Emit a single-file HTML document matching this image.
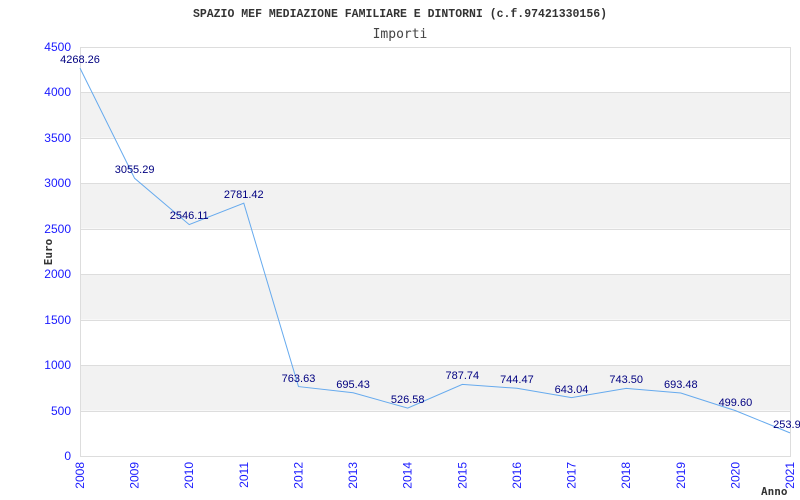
<!DOCTYPE html>
<html><head><meta charset="utf-8"><style>
html,body{margin:0;padding:0;background:#fff;width:800px;height:500px;overflow:hidden}
</style></head><body>
<svg width="800" height="500" xmlns="http://www.w3.org/2000/svg" font-family="Liberation Sans, sans-serif">
<rect width="800" height="500" fill="#fff"/>
<g fill="#f2f2f2">
<rect x="80" y="92" width="710" height="45.5"/>
<rect x="80" y="183" width="710" height="45.5"/>
<rect x="80" y="274" width="710" height="45.5"/>
<rect x="80" y="365" width="710" height="45.5"/>
</g>
<g stroke="#dddddd" stroke-width="1">
<line x1="80" y1="47.5" x2="790" y2="47.5"/>
<line x1="80" y1="92.5" x2="790" y2="92.5"/>
<line x1="80" y1="138.5" x2="790" y2="138.5"/>
<line x1="80" y1="183.5" x2="790" y2="183.5"/>
<line x1="80" y1="229.5" x2="790" y2="229.5"/>
<line x1="80" y1="274.5" x2="790" y2="274.5"/>
<line x1="80" y1="320.5" x2="790" y2="320.5"/>
<line x1="80" y1="365.5" x2="790" y2="365.5"/>
<line x1="80" y1="411.5" x2="790" y2="411.5"/>
<line x1="80" y1="456.5" x2="790" y2="456.5"/>
<line x1="80.5" y1="47" x2="80.5" y2="457"/>
<line x1="790.5" y1="47" x2="790.5" y2="457"/>
</g>
<text x="400" y="17" text-anchor="middle" font-family="Liberation Mono, monospace" font-weight="bold" font-size="11.5" fill="#333">SPAZIO MEF MEDIAZIONE FAMILIARE E DINTORNI (c.f.97421330156)</text>
<text x="400" y="38" text-anchor="middle" font-family="DejaVu Sans Mono, monospace" font-size="13" fill="#444">Importi</text>
<g fill="#1a1aff" font-size="12" text-anchor="end">
<text x="71" y="51">4500</text><text x="71" y="96">4000</text><text x="71" y="142">3500</text>
<text x="71" y="187">3000</text><text x="71" y="233">2500</text><text x="71" y="278">2000</text>
<text x="71" y="324">1500</text><text x="71" y="369">1000</text><text x="71" y="415">500</text>
<text x="71" y="460">0</text>
</g>
<text transform="translate(52,252) rotate(-90)" text-anchor="middle" font-family="DejaVu Sans Mono, monospace" font-weight="bold" font-size="11" fill="#333">Euro</text>
<g fill="#1a1aff" font-size="12" text-anchor="end">
<text transform="translate(84,462) rotate(-90)">2008</text>
<text transform="translate(138.6,462) rotate(-90)">2009</text>
<text transform="translate(193.2,462) rotate(-90)">2010</text>
<text transform="translate(247.8,462) rotate(-90)">2011</text>
<text transform="translate(302.5,462) rotate(-90)">2012</text>
<text transform="translate(357.1,462) rotate(-90)">2013</text>
<text transform="translate(411.7,462) rotate(-90)">2014</text>
<text transform="translate(466.3,462) rotate(-90)">2015</text>
<text transform="translate(520.9,462) rotate(-90)">2016</text>
<text transform="translate(575.5,462) rotate(-90)">2017</text>
<text transform="translate(630.2,462) rotate(-90)">2018</text>
<text transform="translate(684.8,462) rotate(-90)">2019</text>
<text transform="translate(739.4,462) rotate(-90)">2020</text>
<text transform="translate(794,462) rotate(-90)">2021</text>
</g>
<text x="761" y="495" font-family="DejaVu Sans Mono, monospace" font-weight="bold" font-size="11" fill="#333">Anno</text>
<polyline fill="none" stroke="#66aaee" stroke-width="1" points="80,68.1 134.6,178.3 189.2,224.6 243.8,203.2 298.5,386.6 353.1,392.8 407.7,408.1 462.3,384.4 516.9,388.3 571.5,397.6 626.2,388.4 680.8,393 735.4,410.6 790,432.9"/>
<g fill="#000080" font-size="11" text-anchor="middle">
<text x="80" y="63">4268.26</text>
<text x="134.6" y="173">3055.29</text>
<text x="189.2" y="219">2546.11</text>
<text x="243.8" y="198">2781.42</text>
<text x="298.5" y="382">763.63</text>
<text x="353.1" y="388">695.43</text>
<text x="407.7" y="403">526.58</text>
<text x="462.3" y="379">787.74</text>
<text x="516.9" y="383">744.47</text>
<text x="571.5" y="393">643.04</text>
<text x="626.2" y="383">743.50</text>
<text x="680.8" y="388">693.48</text>
<text x="735.4" y="406">499.60</text>
<text x="790" y="428">253.90</text>
</g>
</svg>
</body></html>
